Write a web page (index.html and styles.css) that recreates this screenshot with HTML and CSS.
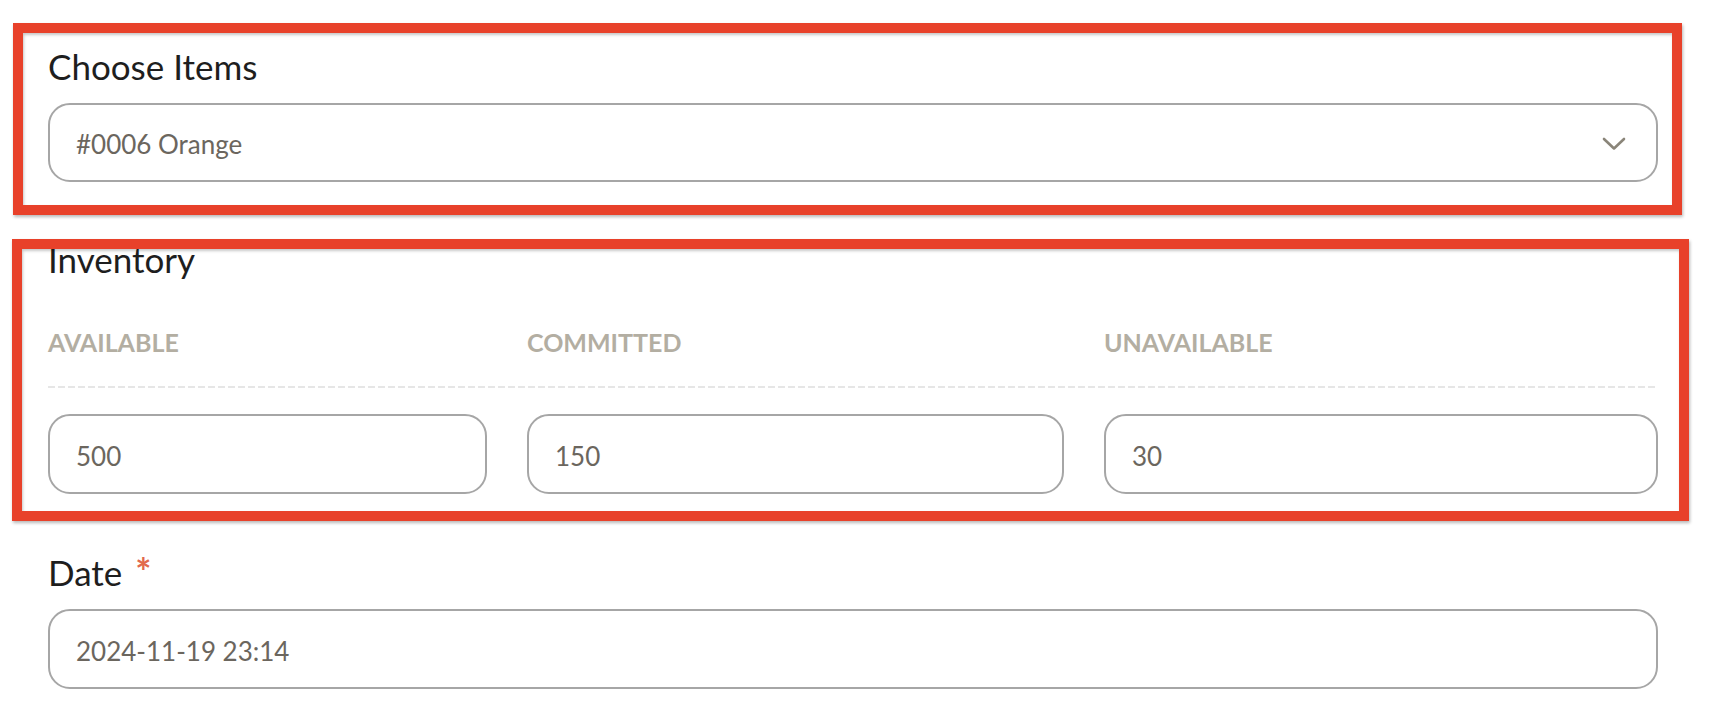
FILE: index.html
```html
<!DOCTYPE html>
<html lang="en">
<head>
<meta charset="utf-8">
<title>Item form</title>
<link rel="stylesheet" href="styles.css">
</head>
<body>
<div class="page">
  <div class="field">
    <label class="field-label">Choose Items</label>
    <div class="select">
      <span class="control-text">#0006 Orange</span>
      <svg class="chevron" width="24" height="14" viewBox="0 0 24 14" aria-hidden="true">
        <polyline points="2,2 12,11.5 22,2" fill="none" stroke="#8a8579" stroke-width="2.6" stroke-linecap="round" stroke-linejoin="round"/>
      </svg>
    </div>
  </div>

  <div class="field inventory">
    <label class="field-label">Inventory</label>
    <div class="inv-grid">
      <div class="inv-head">AVAILABLE</div>
      <div class="inv-head">COMMITTED</div>
      <div class="inv-head">UNAVAILABLE</div>
      <div class="inv-rule"></div>
      <div class="input"><span class="control-text">500</span></div>
      <div class="input"><span class="control-text">150</span></div>
      <div class="input"><span class="control-text">30</span></div>
    </div>
  </div>

  <div class="field date">
    <label class="field-label">Date<span class="req">*</span></label>
    <div class="input"><span class="control-text">2024-11-19 23:14</span></div>
  </div>

  <div class="mark mark-one"></div>
  <div class="mark mark-two"></div>
</div>
</body>
</html>
```

FILE: styles.css
```css
html, body {
  margin: 0;
  padding: 0;
  background: #ffffff;
}

.page {
  position: relative;
  padding: 46px 59px 0 48px;
  font-family: Lato, "Open Sans", sans-serif;
}

.field-label {
  display: block;
  font-size: 35px;
  line-height: 40px;
  color: #1e1e1e;
  font-weight: 400;
}

.field > .field-label {
  margin-bottom: 17px;
}

.select,
.input {
  box-sizing: border-box;
  height: 80px;
  border: 2px solid #a6a6a6;
  border-radius: 22px;
  display: flex;
  align-items: center;
  padding: 3px 30px 0 26px;
  background: #fff;
}

.select {
  justify-content: space-between;
  height: 79px;
  padding-top: 2px;
}

.control-text {
  font-size: 26px;
  color: #6b665e;
  line-height: 30px;
}

.chevron {
  display: block;
}

.inventory {
  margin-top: 57px;
}

.inventory > .field-label {
  margin-bottom: 48px;
}

.inv-grid {
  display: grid;
  grid-template-columns: 439fr 537fr 554fr;
  column-gap: 40px;
}

.inv-head {
  font-size: 25px;
  line-height: 30px;
  font-weight: 700;
  color: #b3aea2;
  padding-bottom: 29px;
}

.inv-rule {
  grid-column: 1 / -1;
  height: 2px;
  margin-bottom: 26px;
  background: repeating-linear-gradient(90deg, #e6e6e6 0 7px, transparent 7px 10px);
}

.date {
  margin-top: 58px;
}

.req {
  color: #e2694d;
  font-size: 38px;
  font-weight: 700;
  line-height: 38px;
  margin-left: 13px;
  vertical-align: top;
}

.mark {
  position: absolute;
  box-sizing: border-box;
  border: 10px solid #e8412a;
  box-shadow: 1px 2px 3px rgba(0, 0, 0, 0.28), inset 1px 2px 3px rgba(0, 0, 0, 0.22);
  pointer-events: none;
}

.mark-one {
  left: 13px;
  top: 23px;
  width: 1669px;
  height: 192px;
}

.mark-two {
  left: 12px;
  top: 239px;
  width: 1677px;
  height: 282px;
}
```
